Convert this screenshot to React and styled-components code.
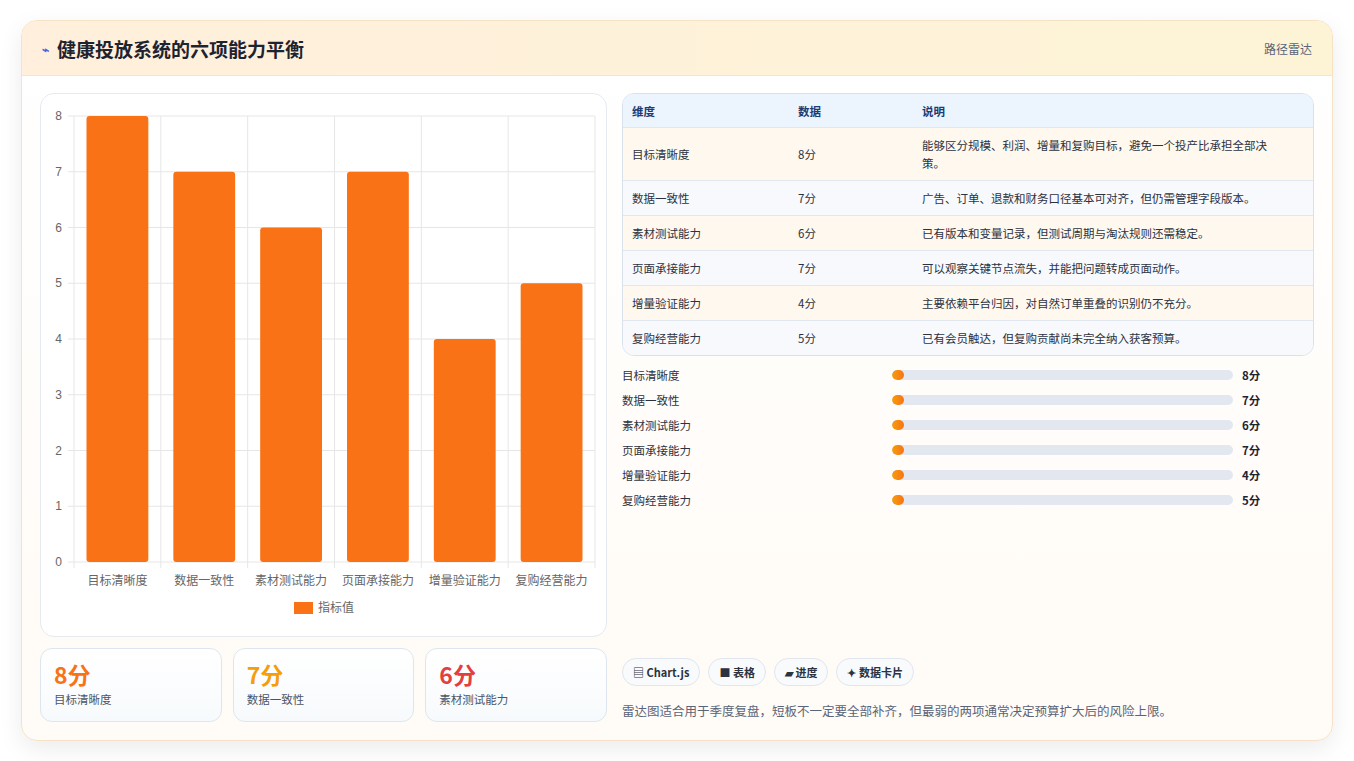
import React from "react";
import styled, { createGlobalStyle } from "styled-components";

const Global = createGlobalStyle`
  html,body{margin:0;padding:0;background:#fff;}
  body{font-family:"Noto Sans CJK SC","Liberation Sans",sans-serif;}
  *{box-sizing:border-box;}
`;
const Page = styled.div`padding:20px 21px 20px 21px;height:761px;`;
const Card = styled.div`
  height:721px;border-radius:16px;border:1px solid #f6e2c4;overflow:hidden;
  background:linear-gradient(180deg,#fff 0%,#fffbf6 100%);
  box-shadow:0 8px 24px rgba(0,0,0,0.08);display:flex;flex-direction:column;
`;
const Header = styled.div`
  height:55px;flex:none;display:flex;align-items:center;justify-content:space-between;
  padding:0 20px;background:linear-gradient(90deg,#ffefdc 0%,#fdf4d6 100%);
  border-bottom:1px solid #f1e6d6;
`;
const Title = styled.h1`margin:0;font-size:19px;font-weight:700;color:#1e2330;display:flex;align-items:center;gap:8px;`;
const Bolt = styled.span`color:#4a63e0;font-size:12px;`;
const Link = styled.span`font-size:12px;color:#5a6478;`;
const Body = styled.div`flex:1;display:grid;grid-template-columns:567px 1fr;gap:15px;padding:17px 18px 18px 18px;`;
const Col = styled.div`display:flex;flex-direction:column;gap:11px;min-height:0;`;
const ChartBox = styled.div`height:544px;border:1px solid #e5e9f0;border-radius:14px;background:#fff;`;
const Stats = styled.div`display:grid;grid-template-columns:repeat(3,1fr);gap:11px;`;
const Stat = styled.div`height:74px;border:1px solid #dde6ef;border-radius:12px;background:linear-gradient(180deg,#fff,#f7fafc);padding:10px 13px;`;
const StatVal = styled.div`font-size:23px;font-weight:700;color:${p=>p.c};line-height:30px;`;
const StatLab = styled.div`font-size:11.5px;color:#4b5566;margin-top:2px;`;
const Table = styled.div`border:1px solid #d8e2ee;border-radius:12px;overflow:hidden;`;
const Row = styled.div`
  display:grid;grid-template-columns:166px 124px 1fr;padding:0 28px 0 9px;
  min-height:${p=>p.h||35}px;align-items:center;font-size:11.5px;color:#2c3240;line-height:18px;
  background:${p=>p.head?"#ecf4fd":p.alt?"#f7f9fc":"#fff8ef"};
  border-top:${p=>p.head?"none":"1px solid #e1e7ef"};
  font-weight:${p=>p.head?700:400};${p=>p.head&&"color:#1f3b73;height:33px;min-height:33px;"}
`;
const Bars = styled.div`display:flex;flex-direction:column;gap:7px;margin-top:-1px;padding-right:44px;`;
const BarRow = styled.div`display:grid;grid-template-columns:261px 1fr 28px;gap:9px;align-items:center;font-size:11.5px;color:#2c3240;height:18px;`;
const Track = styled.div`height:10px;border-radius:5px;background:#e3e8f0;overflow:hidden;`;
const Fill = styled.div`height:100%;border-radius:5px;background:linear-gradient(90deg,#f59e0b,#f97316);`;
const Score = styled.span`font-weight:700;color:#1e2330;`;
const Spacer = styled.div`flex:1;`;
const Chips = styled.div`display:flex;gap:8px;`;
const Chip = styled.span`height:28px;padding:0 10px;border:1px solid #e1e6ee;border-radius:14px;background:#f8fafc;font-size:11px;font-weight:700;color:#2c3240;display:flex;align-items:center;gap:3px;`;
const Note = styled.div`font-size:12.5px;color:#5a6478;margin-top:4px;margin-bottom:2px;`;

const data=[["目标清晰度",8,"能够区分规模、利润、增量和复购目标，避免一个投产比承担全部决策。"],["数据一致性",7,"广告、订单、退款和财务口径基本可对齐，但仍需管理字段版本。"],["素材测试能力",6,"已有版本和变量记录，但测试周期与淘汰规则还需稳定。"],["页面承接能力",7,"可以观察关键节点流失，并能把问题转成页面动作。"],["增量验证能力",4,"主要依赖平台归因，对自然订单重叠的识别仍不充分。"],["复购经营能力",5,"已有会员触达，但复购贡献尚未完全纳入获客预算。"]];

function Chart(){
  const x0=33,x1=554,y0=22,y1=468,step=(y1-y0)/8,cw=(x1-x0)/6;
  return <svg width="565" height="542">
    {Array.from({length:9},(_,i)=>{const y=y1-i*step;return <g key={i}>
      <line x1={x0-6} x2={x1} y1={y} y2={y} stroke="#e6e6e6"/>
      <text x={x0-12} y={y+4} fontSize="12" fill="#666" textAnchor="end" fontFamily="Liberation Sans">{i}</text></g>})}
    {Array.from({length:7},(_,i)=><line key={i} x1={x0+i*cw} x2={x0+i*cw} y1={y0} y2={y1+6} stroke="#e6e6e6"/>)}
    {data.map((d,i)=>{const h=d[1]*step;return <g key={i}>
      <rect x={x0+i*cw+12.5} y={y1-h} width={cw-25} height={h} rx="3" fill="#f97316"/>
      <text x={x0+i*cw+cw/2} y={y1+23} fontSize="12" fill="#666" textAnchor="middle">{d[0]}</text></g>})}
    <rect x="253" y="508" width="19" height="12" fill="#f97316"/>
    <text x="277" y="518" fontSize="12" fill="#666">指标值</text>
  </svg>;
}

export default function App(){
  return <Page><Global/><Card>
    <Header><Title><Bolt>⌁</Bolt>健康投放系统的六项能力平衡</Title><Link>路径雷达</Link></Header>
    <Body>
      <Col>
        <ChartBox><Chart/></ChartBox>
        <Stats>
          <Stat><StatVal c="#f97316">8分</StatVal><StatLab>目标清晰度</StatLab></Stat>
          <Stat><StatVal c="#f59e0b">7分</StatVal><StatLab>数据一致性</StatLab></Stat>
          <Stat><StatVal c="#e53e3e">6分</StatVal><StatLab>素材测试能力</StatLab></Stat>
        </Stats>
      </Col>
      <Col>
        <Table>
          <Row head><span>维度</span><span>数据</span><span>说明</span></Row>
          {data.map((d,i)=><Row key={i} alt={i%2===1} h={i===0?53:35}><span>{d[0]}</span><span>{d[1]}分</span><span>{d[2]}</span></Row>)}
        </Table>
        <Bars>
          {data.map((d,i)=><BarRow key={i}><span>{d[0]}</span><Track><Fill style={{width:"3.5%"}}/></Track><Score>{d[1]}分</Score></BarRow>)}
        </Bars>
        <Spacer/>
        <Chips><Chip>▤ Chart.js</Chip><Chip>■ 表格</Chip><Chip>▰ 进度</Chip><Chip>✦ 数据卡片</Chip></Chips>
        <Note>雷达图适合用于季度复盘，短板不一定要全部补齐，但最弱的两项通常决定预算扩大后的风险上限。</Note>
      </Col>
    </Body>
  </Card></Page>;
}
